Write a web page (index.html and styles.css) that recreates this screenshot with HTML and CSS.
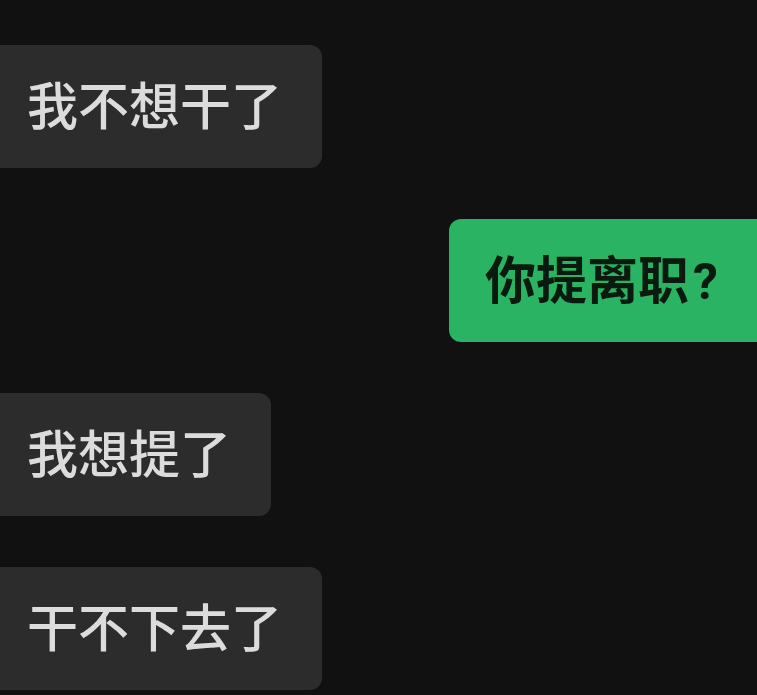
FILE: index.html
```html
<!DOCTYPE html>
<html lang="zh-CN">
<head>
<meta charset="utf-8">
<title>聊天</title>
<link rel="stylesheet" href="styles.css">
</head>
<body>
<main class="chat">
  <div class="msg msg-in"><div class="bubble">我不想干了</div></div>
  <div class="msg msg-out"><div class="bubble">你提离职<span class="punct">?</span></div></div>
  <div class="msg msg-in"><div class="bubble">我想提了</div></div>
  <div class="msg msg-in"><div class="bubble">干不下去了</div></div>
</main>
</body>
</html>
```
FILE: styles.css
```css
html, body {
  margin: 0;
  padding: 0;
  background: #111111;
  overflow: hidden;
}

.chat {
  display: flex;
  flex-direction: column;
  gap: 51px;
  padding-top: 45px;
  width: 757px;
  height: 695px;
  box-sizing: border-box;
  font-family: "Noto Sans CJK SC", "Noto Sans", sans-serif;
}

.msg {
  display: flex;
}

.msg-in {
  justify-content: flex-start;
}

.msg-out {
  justify-content: flex-end;
}

/* bubble text sits on one centred line; a small bottom pad lifts it a touch */
.bubble {
  height: 123px;
  box-sizing: border-box;
  padding-bottom: 6px;
  font-size: 51px;
  line-height: 117px;
  border-radius: 12px;
  white-space: nowrap;
}

.msg-in .bubble {
  background: #2c2c2c;
  color: #dcdcdc;
  font-weight: 500;
  margin-left: -30px;
  padding-left: 57px;
  padding-right: 40px;
}

.msg-out .bubble {
  background: #29b363;
  color: #0a1a0f;
  font-weight: 700;
  margin-right: -30px;
  padding-left: 36px;
  padding-right: 69px;
}

.punct {
  font-family: Roboto, "Noto Sans", sans-serif;
  font-size: 50px;
  font-weight: 700;
  margin-left: 4px;
}
```
